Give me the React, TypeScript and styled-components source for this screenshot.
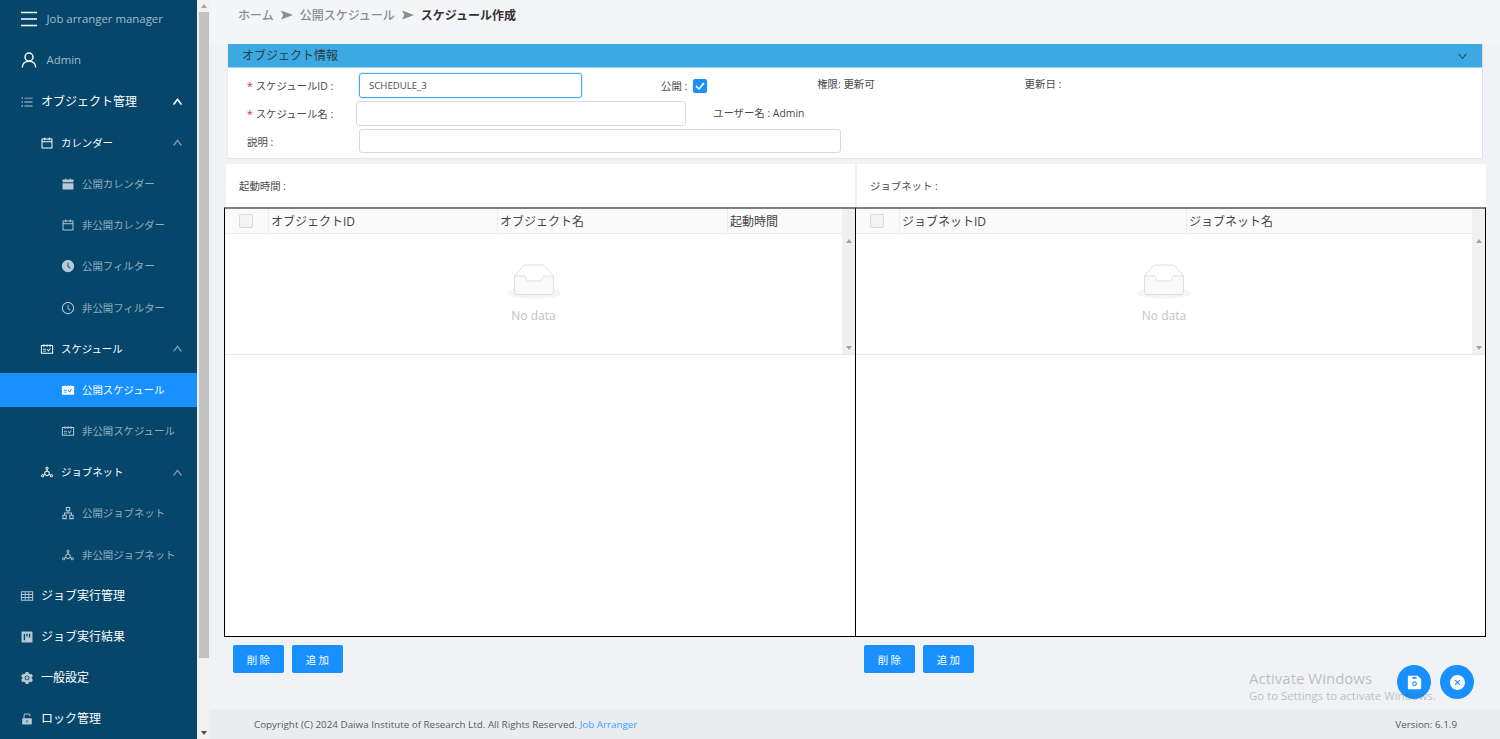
import React from "react"
import styled, { createGlobalStyle } from "styled-components"
import {
  AiFillCalendar,
  AiFillClockCircle,
  AiFillCloseCircle,
  AiFillProject,
  AiFillSave,
  AiFillSchedule,
  AiFillSetting,
  AiFillUnlock,
  AiOutlineApartment,
  AiOutlineCalendar,
  AiOutlineClockCircle,
  AiOutlineDeploymentUnit,
  AiOutlineDown,
  AiOutlineSchedule,
  AiOutlineTable,
  AiOutlineUnorderedList,
  AiOutlineUp,
} from "react-icons/ai"

const GlobalStyle = createGlobalStyle`
  html, body {
    margin: 0;
    padding: 0;
    height: 100%;
    overflow: hidden;
    font-family: "Open Sans", "Noto Sans CJK JP", sans-serif;
    font-size: 10.4px;
    color: #4a4a4a;
  }
  * { box-sizing: border-box; }
`

const Page = styled.div`
  display: flex;
  width: 1500px;
  height: 739px;
  overflow: hidden;
  position: relative;
  background: #f0f2f5;
`

const Sidebar = styled.nav`
  width: 197px;
  height: 739px;
  padding-top: 2.3px;
  flex: none;
  background: #05466a;
  overflow: hidden;
`

const NavRow = styled.div<{ $level: number; $active?: boolean; $brand?: boolean }>`
  display: flex;
  align-items: center;
  height: 34px;
  margin-bottom: 7.18px;
  padding-left: ${props => (props.$level === 0 ? 21 : props.$level === 1 ? 41 : 62)}px;
  padding-right: 14px;
  line-height: 16px;
  font-size: ${props => (props.$brand ? "11.4px" : props.$level === 0 ? "12px" : "10.4px")};
  color: ${props => {
    if (props.$brand) return "#a3bccb"
    if (props.$active || props.$level < 2) return "#ffffff"
    return "#93aebe"
  }};
  background: ${props => (props.$active ? "#1890ff" : "transparent")};
  white-space: nowrap;
`

const BrandIcon = styled.span`
  display: flex;
  width: 25.5px;
  flex: none;
`

const NavIcon = styled.span<{ $bright?: boolean }>`
  display: flex;
  align-items: center;
  width: 20px;
  margin-left: -1px;
  margin-right: 1px;
  flex: none;
  font-size: 14px;
  color: ${props => (props.$bright ? "#ffffff" : "#b5c8d3")};
`

const NavLabel = styled.span`
  flex: 1;
`

const Caret = styled.span<{ $bright?: boolean }>`
  display: flex;
  font-size: 11px;
  color: ${props => (props.$bright ? "#ffffff" : "#8aa6b7")};

  svg {
    stroke: currentColor;
    stroke-width: ${props => (props.$bright ? 90 : 40)};
  }
`

const SideScroll = styled.div`
  display: flex;
  flex-direction: column;
  align-items: center;
  width: 12px;
  flex: none;
  margin-left: 1px;
  background: #f1f1f1;
`

const ScrollArrow = styled.span<{ $dark?: boolean; $down?: boolean }>`
  width: 0;
  height: 0;
  margin: 4px 0;
  flex: none;
  border-left: 3px solid transparent;
  border-right: 3px solid transparent;
  ${props => {
    const color = props.$dark ? "#505050" : "#a3a3a3"
    return props.$down ? `border-top: 4px solid ${color};` : `border-bottom: 4px solid ${color};`
  }}
`

const SideThumb = styled.div`
  width: 10px;
  height: 646px;
  margin-bottom: 69px;
  background: #c1c1c1;
`

const Main = styled.main`
  flex: 1;
  display: flex;
  flex-direction: column;
  min-width: 0;
`

const Breadcrumb = styled.div`
  display: flex;
  align-items: center;
  gap: 7px;
  height: 44px;
  padding: 0 0 14px 28px;
  font-size: 12px;
  font-weight: 500;
  color: #8c8c8c;
  background: #f4f5f7;
`

const Current = styled.span`
  font-weight: 700;
  color: #333333;
`

const Panel = styled.section`
  margin: 0 17px 5px 17px;
  height: 115px;
  background: #ffffff;
  border-right: 1px solid #dcdfe3;
  border-bottom: 1px solid #e2e4e8;
  border-left: 1px solid #e8eaed;
`

const PanelHead = styled.div`
  display: flex;
  align-items: center;
  justify-content: space-between;
  height: 24px;
  padding: 0 14px 2px 14px;
  font-size: 12px;
  color: #2b3a45;
  background: #3ca9e2;
  border-bottom: 1px solid #9fd3ef;
`

const PanelCaret = styled(AiOutlineDown)`
  margin-top: 3px;
  font-size: 11px;
  color: #1f3a4d;
`

const FormRow = styled.div<{ $top: number; $height: number }>`
  display: flex;
  align-items: center;
  height: ${props => props.$height}px;
  margin-top: ${props => props.$top}px;
  padding-left: 19px;
`

const FieldLabel = styled.label<{ $width: number }>`
  flex: none;
  width: ${props => props.$width}px;
  white-space: nowrap;
`

const Required = styled.span`
  margin-right: 3px;
  color: #f5222d;
`

const TextInput = styled.div<{ $width: number; $focused?: boolean }>`
  display: flex;
  align-items: center;
  flex: none;
  width: ${props => props.$width}px;
  height: 100%;
  padding-left: 9px;
  border: 1px solid ${props => (props.$focused ? "#40a9ff" : "#d9d9d9")};
  border-radius: 3px;
  background: #ffffff;
  box-shadow: ${props => (props.$focused ? "0 0 0 1px rgba(24,144,255,.12)" : "none")};
  font-size: 9.6px;
  color: #4a4a4a;
`

const Info = styled.span<{ $left: number; $up?: number }>`
  flex: none;
  margin-left: ${props => props.$left}px;
  position: relative;
  top: ${props => -(props.$up ?? 0)}px;
  white-space: nowrap;
`

const CheckBox = styled.span`
  display: flex;
  align-items: center;
  justify-content: center;
  flex: none;
  width: 14px;
  height: 14px;
  margin-left: 6px;
  border-radius: 2px;
  background: #1890ff;
`

const Boards = styled.div`
  display: grid;
  grid-template-columns: 631px 631px;
  margin-left: 14px;
`

const Board = styled.div`
  display: flex;
  flex-direction: column;
  min-width: 0;
`

const BoardTitle = styled.div`
  display: flex;
  align-items: center;
  height: 43px;
  margin-left: 1px;
  padding: 0 0 1px 13px;
  background: #ffffff;
  border-left: 1px solid #f0f2f5;
`

const TableFrame = styled.div<{ $right?: boolean }>`
  height: 430px;
  margin: ${props => (props.$right ? "0 0 0 1px" : "0 -1px 0 0")};
  background: #ffffff;
  border: 1px solid #000000;
  border-top: 2px solid #808080;
  border-left-width: ${props => (props.$right ? 0 : 1)}px;
`

const TableTop = styled.div<{ $columns: string }>`
  display: grid;
  grid-template-columns: ${props => props.$columns};
  height: 25px;
  background: #fafafa;
  border-bottom: 1px solid #eeeeee;
  font-size: 12px;
  color: #444444;
`

const HeadCell = styled.div`
  display: flex;
  align-items: center;
  padding-left: 2px;
  border-left: 1px solid #eeeeee;
  white-space: nowrap;
`

const CheckCell = styled.div`
  display: flex;
  align-items: center;
  padding-left: 14px;
`

const EmptyCheck = styled.span`
  width: 14px;
  height: 14px;
  border: 1px solid #d9d9d9;
  border-radius: 2px;
  background: #f5f5f5;
`

const HeadTrack = styled.span`
  background: #f0f0f0;
`

const BodyScroll = styled.div`
  display: flex;
  height: 121px;
  border-bottom: 1px solid #e8e8e8;
`

const EmptyState = styled.div`
  flex: 1;
  display: flex;
  flex-direction: column;
  align-items: center;
  padding-top: 30px;
  font-size: 12px;
  color: #c4c4c4;
`

const EmptyText = styled.div`
  margin-top: 8px;
`

const TableTrack = styled.div`
  display: flex;
  flex-direction: column;
  justify-content: space-between;
  align-items: center;
  width: 13px;
  padding-top: 1px;
  background: #f0f0f0;
`

const Actions = styled.div`
  display: flex;
  gap: 8px;
  margin-top: 8px;
  padding-left: 9px;
`

const Button = styled.button`
  width: 51px;
  height: 28px;
  padding: 0 0 0 2px;
  border: 0;
  border-radius: 2px;
  font: inherit;
  font-size: 10.4px;
  letter-spacing: 2.4px;
  color: #ffffff;
  background: #1890ff;
`

const Footer = styled.footer`
  display: flex;
  align-items: center;
  justify-content: space-between;
  height: 30px;
  margin-top: auto;
  padding: 0 43px 0 44px;
  font-size: 9.84px;
  color: #595959;
  background: #e9edf0;
`

const FooterLink = styled.span`
  color: #40a0ff;
`

const Watermark = styled.div`
  position: absolute;
  left: 1249px;
  top: 669px;
  color: rgba(90, 90, 90, 0.36);
  font-size: 11.4px;
  line-height: 16px;
  white-space: nowrap;
`

const WatermarkTitle = styled.div`
  font-size: 15px;
  line-height: 19px;
`

const Fab = styled.button<{ $left: number }>`
  position: absolute;
  left: ${props => props.$left}px;
  top: 665px;
  display: flex;
  align-items: center;
  justify-content: center;
  width: 34px;
  height: 34px;
  padding: 0;
  border: 0;
  border-radius: 50%;
  font-size: 17px;
  color: #ffffff;
  background: #1890ff;
`

function Triangle() {
  return (
    <svg width="12" height="10" viewBox="0 0 13 10">
      <path d="M0 0 L13 5 L0 10 L2.5 5 Z" fill="#8c8c8c" />
    </svg>
  )
}

function Hamburger() {
  return (
    <svg width="16" height="16" viewBox="0 0 16 16">
      <path d="M0 1.5 H16 M0 8 H16 M0 14.5 H16" stroke="#ffffff" strokeWidth="1.3" />
    </svg>
  )
}

function UserGlyph() {
  return (
    <svg width="16" height="16" viewBox="0 0 16 16" fill="none" stroke="#ffffff" strokeWidth="1.4">
      <circle cx="8" cy="5" r="4" />
      <path d="M1.3 15.5 C1.3 11.5 4.3 9.3 8 9.3 S14.7 11.5 14.7 15.5" />
    </svg>
  )
}

function EmptyImage() {
  return (
    <svg width="54" height="35" viewBox="0 0 64 41">
      <g transform="translate(0 1)" fill="none" fillRule="evenodd">
        <ellipse fill="#F5F5F5" cx="32" cy="33" rx="32" ry="7" />
        <g fillRule="nonzero" stroke="#D9D9D9">
          <path d="M55 12.76L44.854 1.258C44.367.474 43.656 0 42.907 0H21.093c-.749 0-1.46.474-1.947 1.257L9 12.761V22h46v-9.24z" />
          <path
            d="M41.613 15.931c0-1.605.994-2.93 2.227-2.931H55v18.137C55 33.26 53.68 35 52.05 35h-40.1C10.32 35 9 33.259 9 31.137V13h11.16c1.233 0 2.227 1.323 2.227 2.928v.022c0 1.605 1.005 2.901 2.237 2.901h14.752c1.232 0 2.237-1.308 2.237-2.913v-.007z"
            fill="#FAFAFA"
          />
        </g>
      </g>
    </svg>
  )
}

type NavEntry = {
  label: string
  level: number
  icon: React.ReactNode
  caret?: boolean
  active?: boolean
}

const navEntries: NavEntry[] = [
  { label: "オブジェクト管理", level: 0, icon: <AiOutlineUnorderedList />, caret: true },
  { label: "カレンダー", level: 1, icon: <AiOutlineCalendar />, caret: true },
  { label: "公開カレンダー", level: 2, icon: <AiFillCalendar /> },
  { label: "非公開カレンダー", level: 2, icon: <AiOutlineCalendar /> },
  { label: "公開フィルター", level: 2, icon: <AiFillClockCircle /> },
  { label: "非公開フィルター", level: 2, icon: <AiOutlineClockCircle /> },
  { label: "スケジュール", level: 1, icon: <AiOutlineSchedule />, caret: true },
  { label: "公開スケジュール", level: 2, icon: <AiFillSchedule />, active: true },
  { label: "非公開スケジュール", level: 2, icon: <AiOutlineSchedule /> },
  { label: "ジョブネット", level: 1, icon: <AiOutlineDeploymentUnit />, caret: true },
  { label: "公開ジョブネット", level: 2, icon: <AiOutlineApartment /> },
  { label: "非公開ジョブネット", level: 2, icon: <AiOutlineDeploymentUnit /> },
  { label: "ジョブ実行管理", level: 0, icon: <AiOutlineTable /> },
  { label: "ジョブ実行結果", level: 0, icon: <AiFillProject /> },
  { label: "一般設定", level: 0, icon: <AiFillSetting /> },
  { label: "ロック管理", level: 0, icon: <AiFillUnlock /> },
]

function ObjectTable({
  title,
  columns,
  headers,
  right,
}: {
  title: string
  columns: string
  headers: string[]
  right?: boolean
}) {
  return (
    <Board>
      <BoardTitle>{title}</BoardTitle>
      <TableFrame $right={right}>
        <TableTop $columns={columns}>
          <CheckCell>
            <EmptyCheck />
          </CheckCell>
          {headers.map(header => (
            <HeadCell key={header}>{header}</HeadCell>
          ))}
          <HeadTrack />
        </TableTop>
        <BodyScroll>
          <EmptyState>
            <EmptyImage />
            <EmptyText>No data</EmptyText>
          </EmptyState>
          <TableTrack>
            <ScrollArrow />
            <ScrollArrow $down />
          </TableTrack>
        </BodyScroll>
      </TableFrame>
      <Actions>
        <Button>削除</Button>
        <Button>追加</Button>
      </Actions>
    </Board>
  )
}

export default function App() {
  return (
    <Page>
      <GlobalStyle />
      <Sidebar>
        <NavRow $level={0} $brand>
          <BrandIcon>
            <Hamburger />
          </BrandIcon>
          <NavLabel>Job arranger manager</NavLabel>
        </NavRow>
        <NavRow $level={0} $brand>
          <BrandIcon>
            <UserGlyph />
          </BrandIcon>
          <NavLabel>Admin</NavLabel>
        </NavRow>
        {navEntries.map(entry => (
          <NavRow key={entry.label} $level={entry.level} $active={entry.active}>
            <NavIcon $bright={entry.active || entry.level === 1}>{entry.icon}</NavIcon>
            <NavLabel>{entry.label}</NavLabel>
            {entry.caret && (
              <Caret $bright={entry.level === 0}>
                <AiOutlineUp />
              </Caret>
            )}
          </NavRow>
        ))}
      </Sidebar>
      <SideScroll>
        <ScrollArrow />
        <SideThumb />
        <ScrollArrow $dark $down />
      </SideScroll>
      <Main>
        <Breadcrumb>
          <span>ホーム</span>
          <Triangle />
          <span>公開スケジュール</span>
          <Triangle />
          <Current>スケジュール作成</Current>
        </Breadcrumb>
        <Panel>
          <PanelHead>
            オブジェクト情報
            <PanelCaret />
          </PanelHead>
          <FormRow $top={5} $height={25}>
            <FieldLabel $width={112}>
              <Required>*</Required>スケジュールID :
            </FieldLabel>
            <TextInput $width={223} $focused>
              SCHEDULE_3
            </TextInput>
            <Info $left={79}>公開 :</Info>
            <CheckBox>
              <svg width="10" height="8" viewBox="0 0 10 8">
                <path d="M1 4 L4 7 L9 1" fill="none" stroke="#ffffff" strokeWidth="1.6" />
              </svg>
            </CheckBox>
            <Info $left={110} $up={2}>権限: 更新可</Info>
            <Info $left={150} $up={2}>更新日 :</Info>
          </FormRow>
          <FormRow $top={3} $height={25}>
            <FieldLabel $width={109}>
              <Required>*</Required>スケジュール名 :
            </FieldLabel>
            <TextInput $width={330} />
            <Info $left={27} $up={1}>ユーザー名 : Admin</Info>
          </FormRow>
          <FormRow $top={3} $height={24}>
            <FieldLabel $width={112}>説明 :</FieldLabel>
            <TextInput $width={482} />
          </FormRow>
        </Panel>
        <Boards>
          <ObjectTable
            title="起動時間 :"
            columns="43px 229px 230px 115px 13px"
            headers={["オブジェクトID", "オブジェクト名", "起動時間"]}
          />
          <ObjectTable
            right
            title="ジョブネット :"
            columns="43px 287px 286px 13px"
            headers={["ジョブネットID", "ジョブネット名"]}
          />
        </Boards>
        <Footer>
          <span>
            Copyright (C) 2024 Daiwa Institute of Research Ltd. All Rights Reserved.{" "}
            <FooterLink>Job Arranger</FooterLink>
          </span>
          <span>Version: 6.1.9</span>
        </Footer>
      </Main>
      <Fab $left={1397}>
        <AiFillSave />
      </Fab>
      <Fab $left={1440}>
        <AiFillCloseCircle />
      </Fab>
      <Watermark>
        <WatermarkTitle>Activate Windows</WatermarkTitle>
        Go to Settings to activate Windows.
      </Watermark>
    </Page>
  )
}
